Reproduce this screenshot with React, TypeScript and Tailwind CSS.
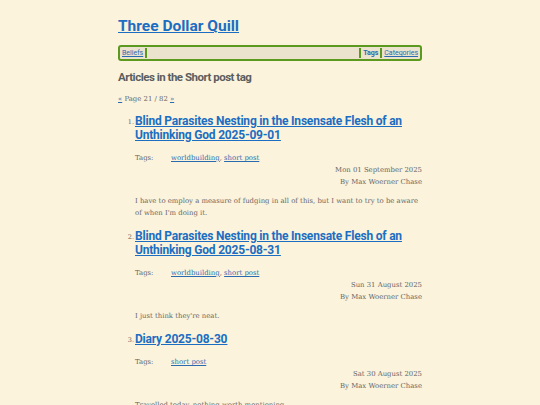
import React from "react";

const sans = { fontFamily: "Roboto, 'Open Sans', sans-serif" };
const serif = { fontFamily: "'DejaVu Serif', serif" };

type Post = { title: string[]; tags: string[]; date: string; excerpt: string[] };

const posts: Post[] = [
  {
    title: ["Blind Parasites Nesting in the Insensate Flesh of an", "Unthinking God 2025-09-01"],
    tags: ["worldbuilding", "short post"],
    date: "Mon 01 September 2025",
    excerpt: ["I have to employ a measure of fudging in all of this, but I want to try to be aware", "of when I'm doing it."],
  },
  {
    title: ["Blind Parasites Nesting in the Insensate Flesh of an", "Unthinking God 2025-08-31"],
    tags: ["worldbuilding", "short post"],
    date: "Sun 31 August 2025",
    excerpt: ["I just think they're neat."],
  },
  {
    title: ["Diary 2025-08-30"],
    tags: ["short post"],
    date: "Sat 30 August 2025",
    excerpt: ["Travelled today, nothing worth mentioning."],
  },
];

export default function App() {
  return (
    <div className="w-full bg-[#fbf3dc] overflow-hidden h-[405px]">
      <div className="w-[304px] mx-auto pt-[14px]">
        <h1 className="text-[15.5px] leading-[24px] font-bold text-[#1b6ec2] underline" style={sans}>
          <a href="#">Three Dollar Quill</a>
        </h1>
        <nav
          className="mt-[7px] h-[16px] border-2 border-[#5c9a1f] rounded-[3px] bg-[#ebe3ce] flex items-center text-[7px] text-[#2a6bb0]"
          style={sans}
        >
          <a href="#" className="underline px-[2px] border-r-2 border-[#5c9a1f] leading-[10px]">Beliefs</a>
          <div className="flex-1" />
          <span className="px-[2px] border-l-2 border-r-2 border-[#5c9a1f] font-bold leading-[10px]">Tags</span>
          <a href="#" className="underline px-[2px] leading-[10px]">Categories</a>
        </nav>
        <h2 className="mt-[7px] text-[11.5px] leading-[18px] font-bold tracking-[-0.5px] text-[#5a5e60]" style={sans}>
          Articles in the Short post tag
        </h2>
        <div className="mt-[8px] text-[6.9px] leading-[10px] text-[#666]" style={serif}>
          <a href="#" className="underline text-[#2a6bb0]">«</a> Page 21 / 82{" "}
          <a href="#" className="underline text-[#2a6bb0]">»</a>
        </div>
        <ol className="mt-[10px]">
          {posts.map((p, i) => (
            <li key={i} className="flex">
              <span className="w-[17px] text-right pr-[1px] text-[6.5px] text-[#666] pt-[4px]" style={serif}>
                {i + 1}.
              </span>
              <div className="flex-1">
                <h3 className="text-[12px] leading-[14px] font-bold tracking-[-0.2px] text-[#1b6ec2] underline whitespace-nowrap" style={sans}>
                  <a href="#">
                    {p.title.map((t, j) => (
                      <span key={j} className="block">{t}</span>
                    ))}
                  </a>
                </h3>
                <div className="mt-[11px] flex text-[6.9px] leading-[10px] text-[#666]" style={serif}>
                  <span className="w-[36px]">Tags:</span>
                  <span>
                    {p.tags.map((t, j) => (
                      <React.Fragment key={j}>
                        <a href="#" className="underline text-[#2a6bb0]">{t}</a>
                        {j < p.tags.length - 1 ? ", " : ""}
                      </React.Fragment>
                    ))}
                  </span>
                </div>
                <div className="mt-[1px] text-right text-[6.9px] leading-[12px] text-[#666]" style={serif}>
                  <div>{p.date}</div>
                  <div>By Max Woerner Chase</div>
                </div>
                <div className="mt-[7px] mb-[10px] text-[6.9px] leading-[12px] text-[#666] whitespace-nowrap" style={serif}>
                  {p.excerpt.map((e, j) => (
                    <div key={j}>{e}</div>
                  ))}
                </div>
              </div>
            </li>
          ))}
        </ol>
      </div>
    </div>
  );
}
